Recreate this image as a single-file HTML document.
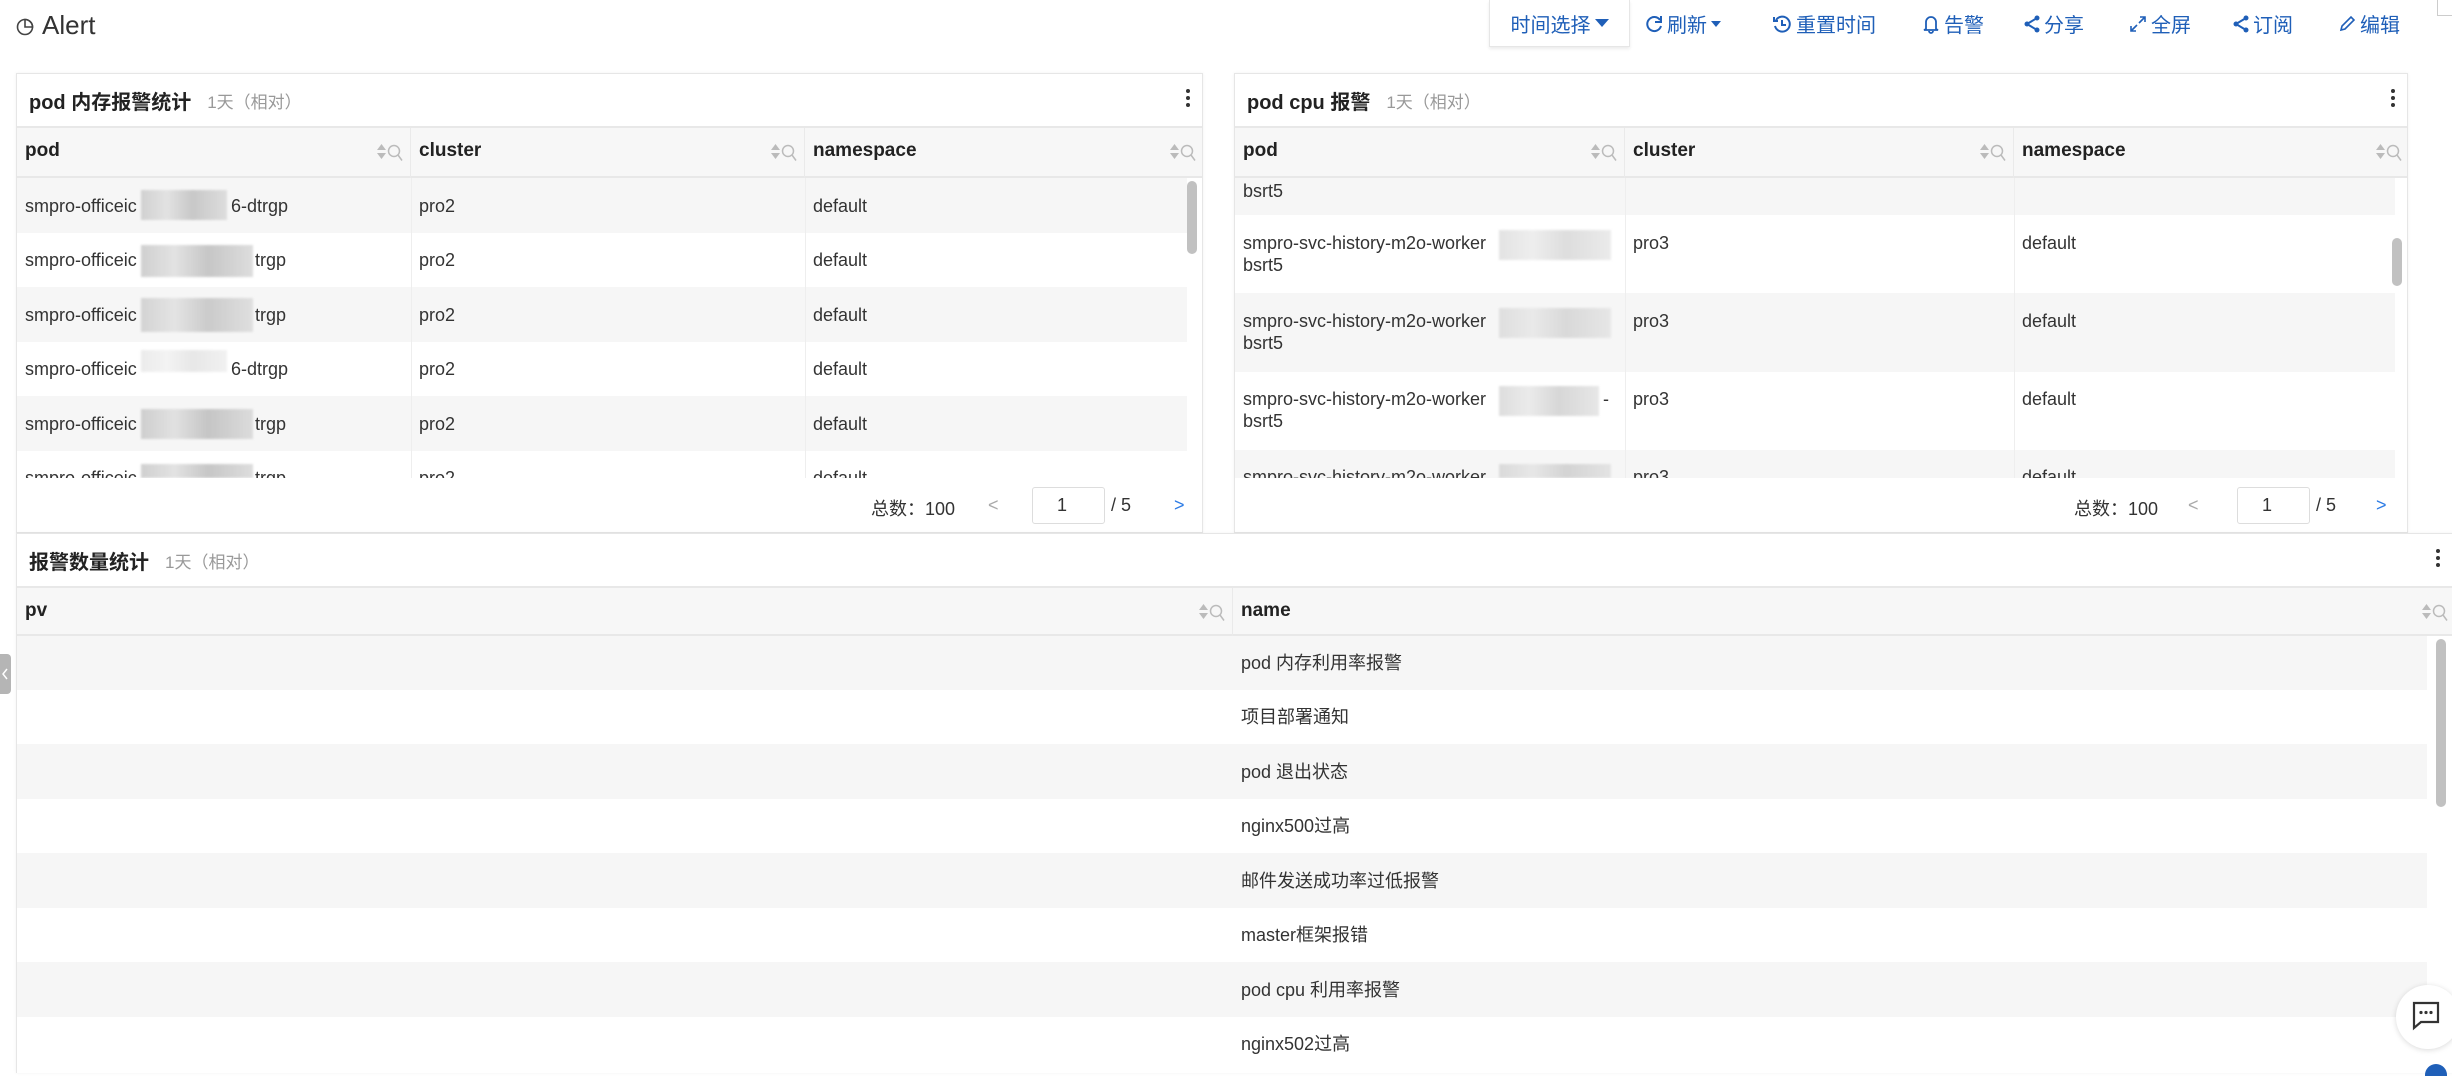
<!DOCTYPE html>
<html><head><meta charset="utf-8">
<style>
*{box-sizing:border-box;margin:0;padding:0}
body{width:2452px;height:1070px;overflow:hidden;background:#fff;font-family:"Liberation Sans","Noto Sans CJK SC",sans-serif;color:#333;position:relative}
.abs{position:absolute}
.title{left:16px;top:10px;font-size:26px;color:#333;display:flex;align-items:center;gap:6px}
.tb{top:0;height:47px;display:flex;align-items:center;font-size:20px;color:#1f5fb8}
.tb span{display:flex;align-items:center;gap:4px}
.btn{left:1489px;width:141px;top:0;height:47px;border:1px solid #e6e6e6;border-top:none;box-shadow:0 2px 3px rgba(0,0,0,.08);justify-content:center}
.panel{border:1px solid #e6e6e6;box-shadow:0 0 3px rgba(0,0,0,.06);background:#fff;overflow:hidden}
.ph{position:absolute;left:0;right:0;top:0;height:52px;display:flex;align-items:center;padding-left:12px;font-size:20px;font-weight:bold;color:#222}
.ph small{font-weight:normal;color:#999;font-size:17px;margin-left:16px}
.dots{position:absolute;right:12px;top:15px;width:4px}
.dots i{display:block;width:4px;height:4px;border-radius:2px;background:#333;margin-bottom:3px}
.thead{position:absolute;left:0;right:0;top:52px;height:52px;background:#f7f7f7;border-top:2px solid #e8e8e8;border-bottom:2px solid #e8e8e8}
.th{position:absolute;top:0;height:50px;font-size:19px;font-weight:bold;color:#222;padding:12px 8px;border-right:1px solid #eaeaea}
.ic{position:absolute;right:6px;top:14px}
.row{position:absolute;left:0;font-size:18px;color:#333}
.row.g{background:#f6f6f6}
.cell{position:absolute;top:0;padding:0 8px;line-height:22px}
.blur{position:absolute;background:linear-gradient(90deg,#c8c8c8,#dedede 30%,#bdbdbd 60%,#d8d8d8);filter:blur(1px)}
.pg{position:absolute;font-size:18px;color:#333}
.inp{position:absolute;width:73px;height:37px;border:1px solid #ddd;border-radius:3px;padding:7px 0 0 24px;font-size:18px}
.sb{position:absolute;background:#c1c1c1;border-radius:6px;width:10px}
</style></head><body>

<div class="abs title"><svg width="20" height="20" viewBox="0 0 20 20"><circle cx="9" cy="11" r="7.5" fill="none" stroke="#444" stroke-width="1.6"/><path d="M9 11V3.5A7.5 7.5 0 0 1 16.5 11Z" fill="none" stroke="#444" stroke-width="1.6"/></svg>Alert</div>

<div class="abs tb btn"><span>时间选择 <svg width="14" height="10"><path d="M0 1h14L7 9z" fill="#1f5fb8"/></svg></span></div>
<div class="abs tb" style="left:1645px"><span><svg width="18" height="20" viewBox="0 0 18 20"><path d="M15 6A7 7 0 1 0 16 12" fill="none" stroke="#1f5fb8" stroke-width="2"/><path d="M16 2v6h-6" fill="none" stroke="#1f5fb8" stroke-width="2"/></svg>刷新 <svg width="10" height="8"><path d="M0 1h10L5 7z" fill="#1f5fb8"/></svg></span></div>
<div class="abs tb" style="left:1772px"><span><svg width="20" height="20" viewBox="0 0 20 20"><path d="M4 6A7.5 7.5 0 1 1 3 12" fill="none" stroke="#1f5fb8" stroke-width="2"/><path d="M2 3v4h4M10 6v5h4" fill="none" stroke="#1f5fb8" stroke-width="2"/></svg>重置时间</span></div>
<div class="abs tb" style="left:1922px"><span><svg width="18" height="20" viewBox="0 0 18 20"><path d="M4 15V8a5 5 0 0 1 10 0v7l2 1H2z M7 17a2 2 0 0 0 4 0" fill="none" stroke="#1f5fb8" stroke-width="1.8"/></svg>告警</span></div>
<div class="abs tb" style="left:2024px"><span><svg width="16" height="18" viewBox="0 0 16 18"><circle cx="3" cy="9" r="2.5" fill="#1f5fb8"/><circle cx="13" cy="3" r="2.5" fill="#1f5fb8"/><circle cx="13" cy="15" r="2.5" fill="#1f5fb8"/><path d="M3 9L13 3M3 9l10 6" stroke="#1f5fb8" stroke-width="2"/></svg>分享</span></div>
<div class="abs tb" style="left:2129px"><span><svg width="18" height="18" viewBox="0 0 18 18"><path d="M2 16l6-6M10 8l6-6M2 11v5h5M11 2h5v5" fill="none" stroke="#1f5fb8" stroke-width="1.6"/></svg>全屏</span></div>
<div class="abs tb" style="left:2233px"><span><svg width="16" height="18" viewBox="0 0 16 18"><circle cx="3" cy="9" r="2.5" fill="#1f5fb8"/><circle cx="13" cy="3" r="2.5" fill="#1f5fb8"/><circle cx="13" cy="15" r="2.5" fill="#1f5fb8"/><path d="M3 9L13 3M3 9l10 6" stroke="#1f5fb8" stroke-width="2"/></svg>订阅</span></div>
<div class="abs tb" style="left:2338px"><span><svg width="18" height="18" viewBox="0 0 18 18"><path d="M3 15l1-4 9-9 3 3-9 9z" fill="none" stroke="#1f5fb8" stroke-width="1.6"/></svg>编辑</span></div>
<div class="abs" style="left:2437px;top:0;width:15px;height:16px;border-left:1px solid #ccc;border-bottom:1px solid #ccc"></div>

<svg width="0" height="0" style="position:absolute"><defs><g id="si"><path d="M1 8l4.5-6 4.5 6zM1 11l4.5 6 4.5-6z" fill="#bbb"/><circle cx="18" cy="9" r="5.5" fill="none" stroke="#bbb" stroke-width="1.5"/><path d="M22 13l4 5.5" stroke="#bbb" stroke-width="1.5"/></g></defs></svg>

<!-- Panel 1 -->
<div class="abs panel" style="left:16px;top:73px;width:1187px;height:460px">
  <div class="ph">pod 内存报警统计<small>1天（相对）</small></div>
  <div class="dots"><i></i><i></i><i></i></div>
  <div class="row g" style="top:104px;width:1170px;height:55px"></div>
  <div class="row" style="top:159px;width:1170px;height:54px"></div>
  <div class="row g" style="top:213px;width:1170px;height:55px"></div>
  <div class="row" style="top:268px;width:1170px;height:54px"></div>
  <div class="row g" style="top:322px;width:1170px;height:55px"></div>
  <div style="position:absolute;left:394px;top:104px;width:1px;height:300px;background:#eee"></div>
  <div style="position:absolute;left:788px;top:104px;width:1px;height:300px;background:#eee"></div>
  <div class="row" style="top:104px;width:1170px;height:300px">
    <div class="cell" style="left:0;top:17px">smpro-officeic</div><div class="cell" style="left:394px;top:17px">pro2</div><div class="cell" style="left:788px;top:17px">default</div>
    <div class="cell" style="left:0;top:71px">smpro-officeic</div><div class="cell" style="left:394px;top:71px">pro2</div><div class="cell" style="left:788px;top:71px">default</div>
    <div class="cell" style="left:0;top:126px">smpro-officeic</div><div class="cell" style="left:394px;top:126px">pro2</div><div class="cell" style="left:788px;top:126px">default</div>
    <div class="cell" style="left:0;top:180px">smpro-officeic</div><div class="cell" style="left:394px;top:180px">pro2</div><div class="cell" style="left:788px;top:180px">default</div>
    <div class="cell" style="left:0;top:235px">smpro-officeic</div><div class="cell" style="left:394px;top:235px">pro2</div><div class="cell" style="left:788px;top:235px">default</div>
    <div class="cell" style="left:0;top:289px">smpro-officeic</div><div class="cell" style="left:394px;top:289px">pro2</div><div class="cell" style="left:788px;top:289px">default</div>
    <div class="blur" style="left:124px;top:12px;width:86px;height:30px;opacity:.8"></div><div class="cell" style="left:206px;top:17px">6-dtrgp</div>
    <div class="blur" style="left:124px;top:67px;width:112px;height:32px;opacity:.85"></div><div class="cell" style="left:230px;top:71px">trgp</div>
    <div class="blur" style="left:124px;top:120px;width:112px;height:34px;opacity:.75"></div><div class="cell" style="left:230px;top:126px">trgp</div>
    <div class="blur" style="left:124px;top:172px;width:86px;height:22px;opacity:.35"></div><div class="cell" style="left:206px;top:180px">6-dtrgp</div>
    <div class="blur" style="left:124px;top:231px;width:112px;height:30px;opacity:.85"></div><div class="cell" style="left:230px;top:235px">trgp</div>
    <div class="blur" style="left:124px;top:286px;width:112px;height:14px;opacity:.85"></div><div class="cell" style="left:230px;top:289px">trgp</div>
  </div>
  <div class="sb" style="left:1170px;top:107px;height:73px"></div>
  <div class="thead">
    <div class="th" style="left:0;width:394px">pod<svg class="ic" width="28" height="22"><use href="#si"/></svg></div>
    <div class="th" style="left:394px;width:394px">cluster<svg class="ic" width="28" height="22"><use href="#si"/></svg></div>
    <div class="th" style="left:788px;width:398px;border-right:none">namespace<svg class="ic" width="28" height="22"><use href="#si"/></svg></div>
  </div>
  <div style="position:absolute;left:0;right:0;top:404px;bottom:0;background:#fff"></div>
  <div class="pg" style="left:854px;top:421px">总数：100</div>
  <div class="pg" style="left:971px;top:421px;color:#aaa">&lt;</div>
  <div class="inp" style="left:1015px;top:413px">1</div>
  <div class="pg" style="left:1094px;top:421px">/ 5</div>
  <div class="pg" style="left:1157px;top:421px;color:#2c7be5">&gt;</div>
</div>

<!-- Panel 2 -->
<div class="abs panel" style="left:1234px;top:73px;width:1174px;height:460px">
  <div class="ph">pod cpu 报警<small>1天（相对）</small></div>
  <div class="dots"><i></i><i></i><i></i></div>
  <div class="row g" style="top:104px;width:1160px;height:37px"></div>
  <div class="row" style="top:141px;width:1160px;height:78px"></div>
  <div class="row g" style="top:219px;width:1160px;height:79px"></div>
  <div class="row" style="top:298px;width:1160px;height:78px"></div>
  <div class="row g" style="top:376px;width:1160px;height:30px"></div>
  <div style="position:absolute;left:390px;top:104px;width:1px;height:300px;background:#eee"></div>
  <div style="position:absolute;left:779px;top:104px;width:1px;height:300px;background:#eee"></div>
  <div class="row" style="top:104px;width:1160px;height:300px">
    <div class="cell" style="left:0;top:2px">bsrt5</div>
    <div class="cell" style="left:0;top:54px">smpro-svc-history-m2o-worker<br>bsrt5</div><div class="cell" style="left:390px;top:54px">pro3</div><div class="cell" style="left:779px;top:54px">default</div>
    <div class="cell" style="left:0;top:132px">smpro-svc-history-m2o-worker<br>bsrt5</div><div class="cell" style="left:390px;top:132px">pro3</div><div class="cell" style="left:779px;top:132px">default</div>
    <div class="cell" style="left:0;top:210px">smpro-svc-history-m2o-worker<br>bsrt5</div><div class="cell" style="left:390px;top:210px">pro3</div><div class="cell" style="left:779px;top:210px">default</div>
    <div class="cell" style="left:0;top:288px">smpro-svc-history-m2o-worker</div><div class="cell" style="left:390px;top:288px">pro3</div><div class="cell" style="left:779px;top:288px">default</div>
    <div class="blur" style="left:264px;top:52px;width:112px;height:30px;opacity:.5"></div>
    <div class="blur" style="left:264px;top:130px;width:112px;height:30px;opacity:.5"></div>
    <div class="blur" style="left:264px;top:208px;width:100px;height:30px;opacity:.6"></div><div class="cell" style="left:360px;top:210px">-</div>
    <div class="blur" style="left:264px;top:286px;width:112px;height:14px;opacity:.6"></div>
  </div>
  <div class="sb" style="left:1157px;top:164px;height:48px"></div>
  <div class="thead">
    <div class="th" style="left:0;width:390px">pod<svg class="ic" width="28" height="22"><use href="#si"/></svg></div>
    <div class="th" style="left:390px;width:389px">cluster<svg class="ic" width="28" height="22"><use href="#si"/></svg></div>
    <div class="th" style="left:779px;width:395px;border-right:none">namespace<svg class="ic" width="28" height="22"><use href="#si"/></svg></div>
  </div>
  <div style="position:absolute;left:0;right:0;top:404px;bottom:0;background:#fff"></div>
  <div class="pg" style="left:839px;top:421px">总数：100</div>
  <div class="pg" style="left:953px;top:421px;color:#aaa">&lt;</div>
  <div class="inp" style="left:1002px;top:413px">1</div>
  <div class="pg" style="left:1081px;top:421px">/ 5</div>
  <div class="pg" style="left:1141px;top:421px;color:#2c7be5">&gt;</div>
</div>

<!-- Panel 3 -->
<div class="abs panel" style="left:16px;top:533px;width:2440px;height:540px;border-right:none;border-bottom:none">
  <div class="ph">报警数量统计<small>1天（相对）</small></div>
  <div class="dots" style="right:16px"><i></i><i></i><i></i></div>
  <div class="row g" style="top:102px;width:2410px;height:54px"></div>
  <div class="row" style="top:156px;width:2410px;height:54px"></div>
  <div class="row g" style="top:210px;width:2410px;height:55px"></div>
  <div class="row" style="top:265px;width:2410px;height:54px"></div>
  <div class="row g" style="top:319px;width:2410px;height:55px"></div>
  <div class="row" style="top:374px;width:2410px;height:54px"></div>
  <div class="row g" style="top:428px;width:2410px;height:55px"></div>
  <div class="row" style="top:483px;width:2410px;height:57px"></div>
  <div class="row" style="top:102px;width:2410px;height:440px">
    <div class="cell" style="left:1216px;top:16px">pod 内存利用率报警</div>
    <div class="cell" style="left:1216px;top:70px">项目部署通知</div>
    <div class="cell" style="left:1216px;top:125px">pod 退出状态</div>
    <div class="cell" style="left:1216px;top:179px">nginx500过高</div>
    <div class="cell" style="left:1216px;top:234px">邮件发送成功率过低报警</div>
    <div class="cell" style="left:1216px;top:288px">master框架报错</div>
    <div class="cell" style="left:1216px;top:343px">pod cpu 利用率报警</div>
    <div class="cell" style="left:1216px;top:397px">nginx502过高</div>
  </div>
  <div class="sb" style="left:2419px;top:105px;height:168px"></div>
  <div class="thead" style="height:50px">
    <div class="th" style="left:0;width:1216px;height:48px">pv<svg class="ic" width="28" height="22"><use href="#si"/></svg></div>
    <div class="th" style="left:1216px;width:1224px;height:48px;border-right:none">name<svg class="ic" style="right:8px" width="28" height="22"><use href="#si"/></svg></div>
  </div>
</div>

<div class="abs" style="left:0;top:654px;width:11px;height:40px;background:#b5b5b5;border-radius:0 4px 4px 0"></div>
<svg class="abs" style="left:2px;top:668px" width="6" height="12"><path d="M5 1L1 6l4 5" fill="none" stroke="#fff" stroke-width="1.5"/></svg>

<div class="abs" style="left:2396px;top:985px;width:64px;height:64px;border-radius:32px;background:#fff;box-shadow:0 1px 6px rgba(0,0,0,.15)"></div>
<svg class="abs" style="left:2411px;top:1000px" width="30" height="32" viewBox="0 0 30 32"><path d="M3 3h24v19H10l-7 6z" fill="none" stroke="#333" stroke-width="2.2"/><circle cx="10" cy="12.5" r="1.6" fill="#333"/><circle cx="15" cy="12.5" r="1.6" fill="#333"/><circle cx="20" cy="12.5" r="1.6" fill="#333"/></svg>
<div class="abs" style="left:2425px;top:1064px;width:22px;height:12px;border-radius:11px 11px 0 0;background:#1f5fb8"></div>
</body></html>
